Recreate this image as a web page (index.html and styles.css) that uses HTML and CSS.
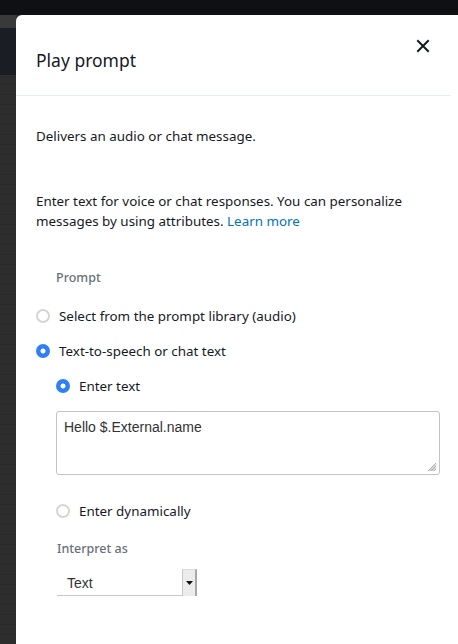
FILE: index.html
```html
<!DOCTYPE html>
<html lang="en">
<head>
<meta charset="utf-8">
<title>Play prompt</title>
<link rel="stylesheet" href="styles.css">
</head>
<body>
<div class="topbar"></div>
<div class="main">
  <div class="side">
    <div class="side-a"></div>
    <div class="side-b"></div>
    <div class="side-c"></div>
  </div>
  <div class="panel">
    <div class="header">
      <h1 class="title">Play prompt</h1>
      <button class="close" aria-label="Close">
        <svg width="14" height="14" viewBox="0 0 14 14"><path d="M2 2 L12 12 M12 2 L2 12" stroke="#16191f" stroke-width="2" stroke-linecap="square"/></svg>
      </button>
    </div>
    <div class="body">
      <p class="desc">Delivers an audio or chat message.</p>
      <p class="info">Enter text for voice or chat responses. You can personalize messages by using attributes. <a href="#" class="link">Learn more</a></p>
      <div class="label">Prompt</div>
      <div class="radio-row"><span class="radio"></span><span class="rlabel">Select from the prompt library (audio)</span></div>
      <div class="radio-row"><span class="radio checked"></span><span class="rlabel">Text-to-speech or chat text</span></div>
      <div class="sub">
        <div class="radio-row"><span class="radio checked"></span><span class="rlabel">Enter text</span></div>
        <div class="textarea">Hello $.External.name
          <svg class="grip" width="10" height="10" viewBox="0 0 10 10"><path d="M9 1 L1 9 M9 4 L4 9 M9 7 L7 9 M9 2.5 L2.5 9 M9 5.5 L5.5 9" stroke="#9a9a9a" stroke-width="0.8"/></svg>
        </div>
        <div class="radio-row dyn"><span class="radio"></span><span class="rlabel">Enter dynamically</span></div>
        <div class="label2">Interpret as</div>
        <div class="select">
          <span class="sel-text">Text</span>
          <span class="sel-btn"><svg width="7" height="4" viewBox="0 0 7 4"><path d="M0 0 H7 L3.5 4 Z" fill="#111"/></svg></span>
        </div>
      </div>
    </div>
  </div>
</div>
</body>
</html>
```

FILE: styles.css
```css
* { box-sizing: border-box; }
html, body { margin: 0; padding: 0; }
body {
  width: 458px;
  height: 644px;
  overflow: hidden;
  background: #2c2c2c;
  font-family: "Noto Sans", "Open Sans", sans-serif;
  color: #16191f;
}
.topbar {
  height: 15px;
  background: #0e1013;
}
.main {
  display: flex;
  height: 629px;
}
.side {
  width: 16px;
  flex: none;
  display: flex;
  flex-direction: column;
}
.side-a { height: 13px; background: #393939; }
.side-b { height: 47px; background: #1a1d24; }
.side-c { flex: 1; background: repeating-linear-gradient(#2d2d2d 0 9px, #292929 9px 10px); }
.panel {
  flex: 1;
  min-width: 0;
  background: #fff;
  border-top-left-radius: 6px;
}
.header {
  height: 81px;
  margin-right: 7px;
  border-bottom: 1px solid #eaeded;
  display: flex;
  justify-content: space-between;
  padding: 0 0 0 20px;
}
.title {
  margin: 33px 0 0;
  font-size: 17.5px;
  font-weight: 400;
  line-height: 24px;
  color: #16191f;
}
.close {
  border: 0;
  background: none;
  padding: 0;
  margin: 24px 21px 0 0;
  width: 14px;
  height: 14px;
  display: flex;
}
.body {
  padding: 30px 20px 0 20px;
  font-size: 13.4px;
  line-height: 20px;
}
.desc { margin: 0; }
.info { margin: 45px 0 0; }
.link { color: #0073bb; text-decoration: none; }
.label {
  margin: 38px 0 0 20px;
  font-size: 12.5px;
  line-height: 18px;
  color: #687078;
  font-weight: 500;
}
.radio-row {
  display: flex;
  align-items: center;
  height: 20px;
  margin-top: 15px;
  gap: 9px;
}
.label + .radio-row { margin-top: 19px; }
.radio {
  width: 14px;
  height: 14px;
  border-radius: 50%;
  border: 2px solid #d5d5d5;
  background: #fff;
  flex: none;
}
.radio.checked {
  border: 0;
  background: radial-gradient(circle, #fff 0 2.2px, #2f80f5 2.8px);
}
.rlabel { color: #16191f; }
.sub { padding-left: 20px; }
.textarea {
  position: relative;
  margin-top: 15px;
  height: 64px;
  width: 384px;
  border: 1px solid #c4c4c4;
  border-radius: 3px;
  padding: 6px 7px;
  font-family: "Liberation Sans", Arial, sans-serif;
  font-size: 14px;
  line-height: 18px;
  color: #333;
}
.grip { position: absolute; right: 2px; bottom: 2px; }
.radio-row.dyn { margin-top: 26px; }
.label2 {
  margin: 19px 0 0 1px;
  font-size: 12.5px;
  line-height: 18px;
  color: #687078;
  font-weight: 500;
}
.select {
  margin: 11px 0 0 1px;
  width: 140px;
  height: 27px;
  display: flex;
  border-bottom: 1px solid #c8c8c8;
}
.sel-text {
  flex: 1;
  padding: 5px 0 0 10px;
  font-family: "Liberation Sans", Arial, sans-serif;
  font-size: 14px;
  line-height: 18px;
  color: #333;
}
.sel-btn {
  width: 15px;
  height: 27px;
  background: #ececec;
  border-left: 1px solid #c8c8c8;
  border-right: 2px solid #a8a8a8;
  border-top: 1px solid #dcdcdc;
  display: flex;
  align-items: center;
  justify-content: center;
}
```
